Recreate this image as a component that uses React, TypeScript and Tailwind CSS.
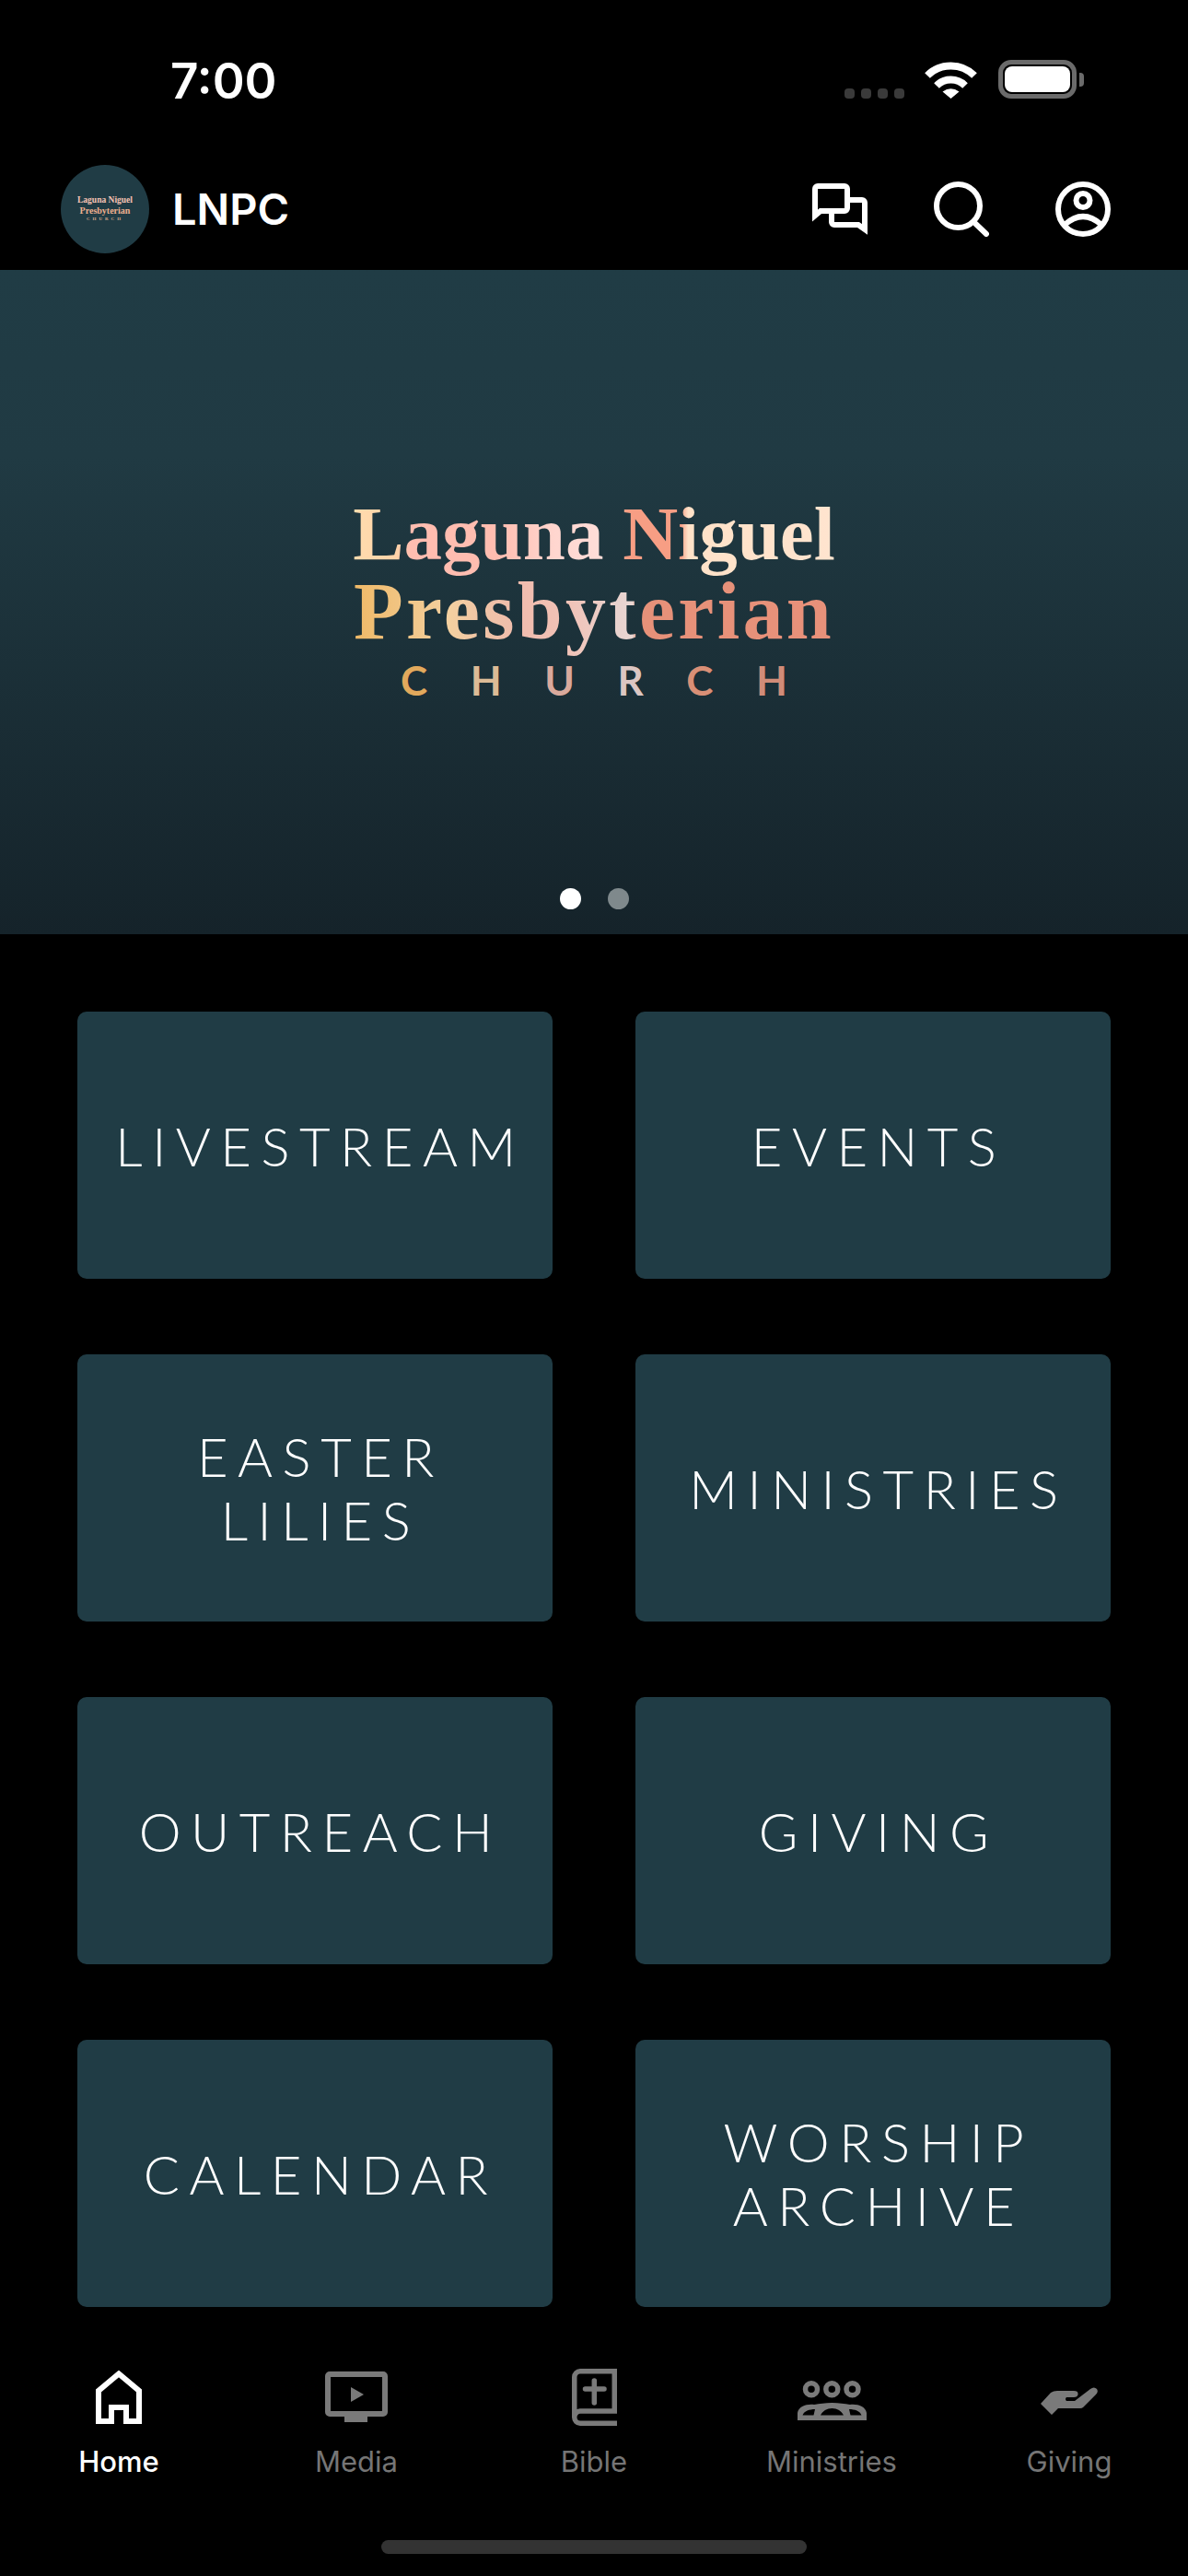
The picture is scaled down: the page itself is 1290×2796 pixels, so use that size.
import React from 'react';

const menu = [
  ['LIVESTREAM'],
  ['EVENTS'],
  ['EASTER', 'LILIES'],
  ['MINISTRIES'],
  ['OUTREACH'],
  ['GIVING'],
  ['CALENDAR'],
  ['WORSHIP', 'ARCHIVE'],
];

const churchLetters = [
  ['C', 'text-[#e2a95c]'],
  ['H', 'text-[#dcbb96]'],
  ['U', 'text-[#d9a99c]'],
  ['R', 'text-[#dcc6c2]'],
  ['C', 'text-[#d98f76]'],
  ['H', 'text-[#d18c78]'],
];

const StatusBar: React.FC = () => (
  <div className="h-[165px] flex justify-between pt-[60px] pl-[185px] pr-[113px]">
    <span className="text-[53px] leading-[56px] font-semibold text-white font-['Inter',sans-serif]">7:00</span>
    <div className="flex items-end h-[47px] pt-[5px]">
      <div className="flex gap-[7px] mr-[22px]">
        <span className="w-[11px] h-[11px] rounded-[4px] bg-[#3a3a3a]"></span>
        <span className="w-[11px] h-[11px] rounded-[4px] bg-[#3a3a3a]"></span>
        <span className="w-[11px] h-[11px] rounded-[4px] bg-[#3a3a3a]"></span>
        <span className="w-[11px] h-[11px] rounded-[4px] bg-[#3a3a3a]"></span>
      </div>
      <svg width="57" height="41" viewBox="0 0 57 41" className="mr-[23px]" fill="none">
        <path d="M3 16 A36 36 0 0 1 54 16" stroke="#fff" strokeWidth="8" />
        <path d="M13 27 A22 22 0 0 1 44 27" stroke="#fff" strokeWidth="8" />
        <path d="M19.5 33.5 Q28.5 27 37.5 33.5 L28.5 41 Z" fill="#fff" />
      </svg>
      <div className="w-[85px] h-[42px] rounded-[14px] border-[5px] border-[#6b6b6b] p-[2px]">
        <div className="w-full h-full rounded-[8px] bg-white"></div>
      </div>
      <div className="w-[5px] h-[15px] mb-[13px] ml-[3px] rounded-r-[4px] bg-[#6b6b6b]"></div>
    </div>
  </div>
);

const Header: React.FC = () => (
  <div className="h-[128px] flex items-center justify-between pl-[66px] pr-[84px]">
    <div className="flex items-center gap-[25px] pb-[5px]">
      <div className="w-[96px] h-[96px] rounded-full bg-[#203c45] flex flex-col items-center justify-center font-['Liberation_Serif',serif] font-bold">
        <span className="text-[9.5px] leading-[11px] text-[#f6c3b4]">Laguna Niguel</span>
        <span className="text-[10px] leading-[11px] text-[#eeb08e]">Presbyterian</span>
        <span className="text-[5px] leading-[8px] tracking-[3px] text-[#d9a98c]">CHURCH</span>
      </div>
      <span className="text-[47px] leading-[54px] font-semibold text-white font-['Inter',sans-serif]">LNPC</span>
    </div>
    <div className="flex items-center pb-[5px]">
      <svg width="60" height="56" viewBox="0 0 60 56" fill="none" stroke="#fff" strokeWidth="6" className="mr-[72px]">
        <path d="M3 35 V6 a3 3 0 0 1 3-3 H35 a3 3 0 0 1 3 3 V27 a3 3 0 0 1-3 3 H9 Z" />
        <path d="M41 18 H54 a3 3 0 0 1 3 3 V50 L50 45 H24 a3 3 0 0 1-3-3 V33" />
      </svg>
      <svg width="60" height="60" viewBox="0 0 60 60" fill="none" stroke="#fff" strokeWidth="6" strokeLinecap="round" className="mr-[72px]">
        <circle cx="26.5" cy="26.5" r="23.5" />
        <path d="M45.5 46 L57 57" />
      </svg>
      <svg width="60" height="60" viewBox="0 0 60 60" fill="none" stroke="#fff" strokeWidth="6">
        <circle cx="30" cy="30" r="27" />
        <circle cx="30" cy="20.5" r="7.5" />
        <path d="M10 47 Q30 29 50 47" />
      </svg>
    </div>
  </div>
);

const Banner: React.FC = () => (
  <div className="relative h-[721px] flex flex-col items-center pt-[245px] bg-[linear-gradient(180deg,#203c45_0%,#203a43_28%,#15232a_100%)]">
    <span className="text-[83px] leading-[83px] pb-[10px] mb-[-10px] font-bold font-['Liberation_Serif',serif] text-transparent bg-clip-text bg-[linear-gradient(90deg,#ffdcae_0%,#ffd3a8_9%,#ffbdb0_12%,#ffbdb0_30%,#ffd6cf_42%,#ffe0dc_55%,#f79e84_56.5%,#f79e84_68%,#ffe2c8_69.5%,#ffe4cf_100%)]">
      Laguna Niguel
    </span>
    <span className="text-[88px] leading-[83px] mt-[1px] pb-[14px] mb-[-14px] tracking-[3.3px] font-bold font-['Liberation_Serif',serif] text-transparent bg-clip-text bg-[linear-gradient(90deg,#efb967_0%,#f4d0a0_20%,#efc3a6_27%,#f0bcae_35%,#f1c3b8_45%,#e8d2ce_55%,#e9d6d2_58%,#e69179_59%,#e8917a_100%)]">
      Presbyterian
    </span>
    <div className="w-[420px] flex justify-between mt-[8px] text-[44px] leading-[50px] font-bold font-['Lato',sans-serif]">
      {churchLetters.map(([letter, color], i) => (
        <span key={i} className={color}>{letter}</span>
      ))}
    </div>
    <div className="absolute left-[608px] bottom-[27px] flex gap-[29px]">
      <span className="w-[23px] h-[23px] rounded-full bg-white"></span>
      <span className="w-[23px] h-[23px] rounded-full bg-[#7f898c]"></span>
    </div>
  </div>
);

const MenuGrid: React.FC = () => (
  <div className="grid grid-cols-[516px_516px] gap-x-[90px] gap-y-[82px] px-[84px] pt-[84px]">
    {menu.map((lines) => (
      <div
        key={lines.join(' ')}
        className="h-[290px] rounded-[10px] bg-[#203c45] flex flex-col items-center justify-center pl-[12px] text-white text-[58px] leading-[69px] font-light tracking-[10.5px] font-['Lato',sans-serif]"
      >
        {lines.map((line) => (
          <span key={line}>{line}</span>
        ))}
      </div>
    ))}
  </div>
);

const HomeIcon = () => (
  <svg width="50" height="58" viewBox="0 0 50 58" fill="none" stroke="#fff" strokeWidth="6">
    <path d="M3 55 V22 L25 3.5 L47 22 V55 H33 V40 H17 V55 Z" />
  </svg>
);

const MediaIcon = () => (
  <svg width="68" height="56" viewBox="0 0 68 56" fill="none">
    <rect x="3" y="3" width="62" height="43" rx="2" stroke="#7a7a7a" strokeWidth="6" />
    <path d="M21 48 H46 V55 H21 Z" fill="#7a7a7a" />
    <path d="M28 17 L42 25 L28 33 Z" fill="#7a7a7a" />
  </svg>
);

const BibleIcon = () => (
  <svg width="49" height="62" viewBox="0 0 49 62" fill="none" stroke="#7a7a7a" strokeWidth="5.5">
    <path d="M49 59.25 H9 a6.5 6.5 0 0 1-6.25-6.5 V9 a6.25 6.25 0 0 1 6.25-6.25 H46.25 V46 H9 a6.5 6.5 0 0 0-6.25 6.75" />
    <path d="M24.3 13 V37 M14.5 22 H35" strokeLinecap="round" />
  </svg>
);

const MinistriesIcon = () => (
  <svg width="75" height="43" viewBox="0 0 75 43" fill="none" className="mt-[6px]">
    <circle cx="15" cy="9.3" r="6.5" stroke="#7a7a7a" strokeWidth="5.5" />
    <circle cx="37.3" cy="9.3" r="6.5" stroke="#7a7a7a" strokeWidth="5.5" />
    <circle cx="59.5" cy="9.3" r="6.5" stroke="#7a7a7a" strokeWidth="5.5" />
    <path
      fillRule="evenodd"
      fill="#7a7a7a"
      d="M0 43 V35 C1 28 10 25 18 26 C24 25 30 24 37.5 24 C45 24 51 25 57 26 C65 25 74 28 75 35 V43 Z M5.5 37.5 H17.5 L19 31 C13 31 7 33 5.5 37.5 Z M25 37.5 H50 C48 33 43 30 37.5 30 C32 30 27 33 25 37.5 Z M69.5 37.5 C68 33 62 31 56 31 L57.5 37.5 Z"
    />
  </svg>
);

const GivingIcon = () => (
  <svg width="62" height="30" viewBox="0 0 62 30" className="mt-[8px]">
    <path
      fill="#7a7a7a"
      d="M0 18 L11 6 Q14 4 18 4 H36 Q41 4 40.5 8 Q40 11 36 11 H28 Q26 13 28 15 H37 L54 2 Q58 -1 61 2 Q63 5 60 8 L46 22 Q45 23 43 23 H19 L12 30 Z"
    />
  </svg>
);

const tabs = [
  { label: 'Home', icon: <HomeIcon />, active: true },
  { label: 'Media', icon: <MediaIcon />, active: false },
  { label: 'Bible', icon: <BibleIcon />, active: false },
  { label: 'Ministries', icon: <MinistriesIcon />, active: false },
  { label: 'Giving', icon: <GivingIcon />, active: false },
];

const TabBar: React.FC = () => (
  <div className="grid grid-cols-5 pt-[64px]">
    {tabs.map((tab) => (
      <div key={tab.label} className="flex flex-col items-center">
        <div className="h-[68px] flex items-center justify-center">{tab.icon}</div>
        <span
          className={`mt-[17px] text-[31px] leading-[38px] font-['Inter',sans-serif] ${tab.active ? 'text-white font-medium' : 'text-[#757575]'}`}
        >
          {tab.label}
        </span>
      </div>
    ))}
  </div>
);

export default function App() {
  return (
    <div className="w-[1290px] h-[2796px] bg-black overflow-hidden flex flex-col">
      <StatusBar />
      <Header />
      <Banner />
      <MenuGrid />
      <TabBar />
      <div className="w-[462px] h-[15px] mx-auto mt-[66px] rounded-full bg-[#333333]"></div>
    </div>
  );
}
